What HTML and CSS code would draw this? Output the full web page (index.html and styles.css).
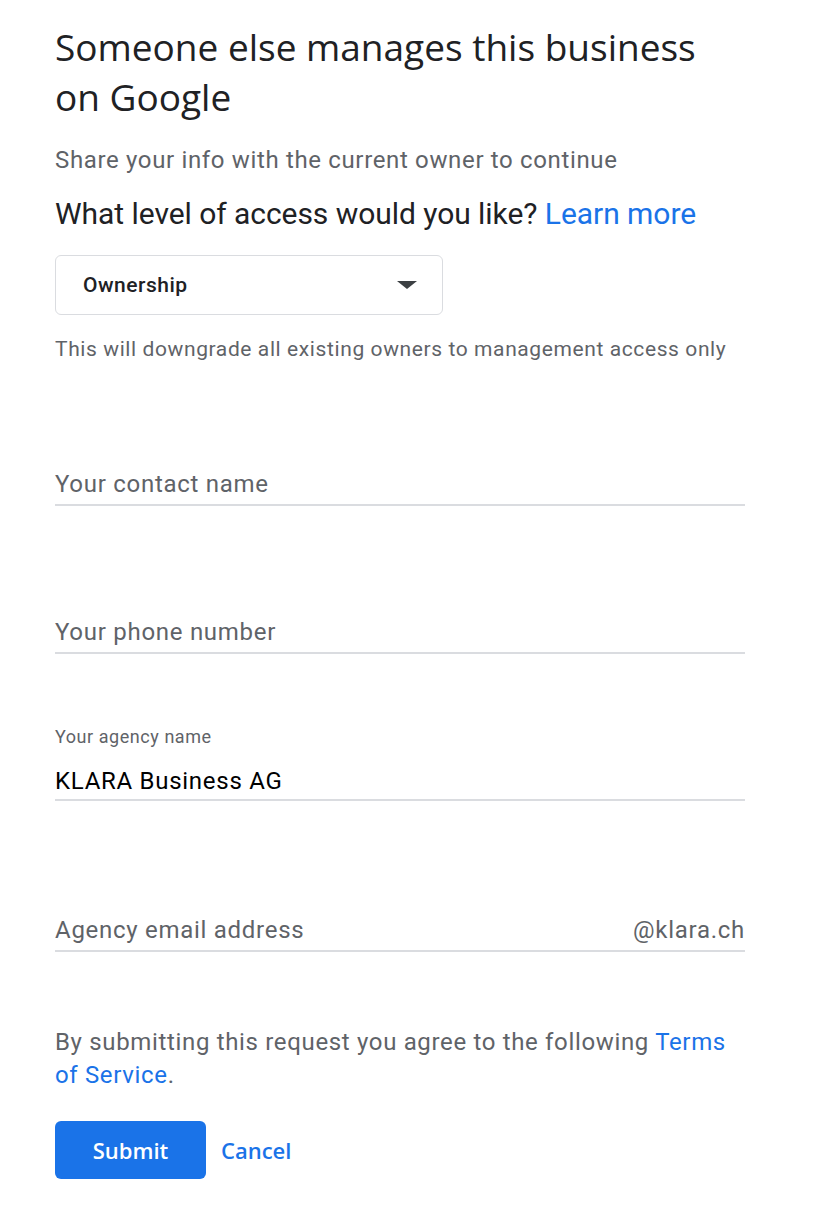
FILE: index.html
```html
<!DOCTYPE html>
<html lang="en">
<head>
<meta charset="utf-8">
<title>Someone else manages this business on Google</title>
<link rel="stylesheet" href="styles.css">
</head>
<body>
<main class="page">
  <h1 class="title">Someone else manages this business on Google</h1>
  <p class="subtitle">Share your info with the current owner to continue</p>
  <p class="question">What level of access would you like? <a class="link" href="#">Learn more</a></p>
  <div class="select">
    <span class="select-value">Ownership</span>
    <span class="select-arrow"></span>
  </div>
  <p class="helper">This will downgrade all existing owners to management access only</p>

  <div class="field field-first">
    <div class="field-label hidden">Your contact name</div>
    <div class="field-input placeholder">Your contact name</div>
  </div>
  <div class="field field-second">
    <div class="field-label hidden">Your phone number</div>
    <div class="field-input placeholder">Your phone number</div>
  </div>
  <div class="field field-third">
    <div class="field-label">Your agency name</div>
    <div class="field-input value">KLARA Business AG</div>
  </div>
  <div class="field field-last">
    <div class="field-label hidden">Agency email address</div>
    <div class="field-input placeholder split"><span>Agency email address</span><span>@klara.ch</span></div>
  </div>

  <p class="terms">By submitting this request you agree to the following <a class="link" href="#">Terms</a> <a class="link" href="#">of Service</a>.</p>

  <div class="actions">
    <button class="btn-primary" type="button">Submit</button>
    <a class="btn-text" href="#">Cancel</a>
  </div>
</main>
</body>
</html>
```

FILE: styles.css
```css
html, body {
  margin: 0;
  padding: 0;
  background: #ffffff;
}

body {
  font-family: Roboto, "Noto Sans", Arial, sans-serif;
  color: #202124;
}

.page {
  width: 690px;
  padding: 22px 0 40px 55px;
}

.title {
  margin: 0;
  max-width: 660px;
  font-family: "Open Sans", Roboto, sans-serif;
  font-weight: 400;
  font-size: 37px;
  line-height: 50px;
  color: #202124;
  letter-spacing: 0;
}

.subtitle {
  margin: 22px 0 0;
  font-size: 24px;
  line-height: 32px;
  letter-spacing: 0.65px;
  color: #5f6368;
}

.question {
  margin: 20px 0 0;
  font-size: 30px;
  line-height: 36px;
  letter-spacing: -0.05px;
  color: #202124;
}

.link {
  color: #1a73e8;
  text-decoration: none;
}

.select {
  margin-top: 23px;
  width: 388px;
  height: 60px;
  box-sizing: border-box;
  border: 1.5px solid #dadce0;
  border-radius: 6px;
  display: flex;
  align-items: center;
  justify-content: space-between;
  padding: 0 25px 0 27px;
}

.select-value {
  font-size: 21px;
  font-weight: 500;
  letter-spacing: 0.5px;
  color: #202124;
}

.select-arrow {
  width: 0;
  height: 0;
  border-left: 10px solid transparent;
  border-right: 10px solid transparent;
  border-top: 8px solid #3c4043;
}

.helper {
  margin: 20px 0 0;
  font-size: 21px;
  line-height: 28px;
  letter-spacing: 0.6px;
  color: #5f6368;
}

.field-first {
  margin-top: 64px;
}

.field-second {
  margin-top: 69px;
}

.field-third {
  margin-top: 71px;
}

.field-last {
  margin-top: 72px;
}

.field-label {
  font-size: 18px;
  line-height: 24px;
  letter-spacing: 0.55px;
  color: #5f6368;
  margin-bottom: 17px;
}

.field-third .field-label {
  margin-bottom: 16px;
}

.field-third .field-input {
  padding-bottom: 2px;
}

.field-label.hidden {
  visibility: hidden;
}

.field-input {
  font-size: 24px;
  line-height: 32px;
  letter-spacing: 0.72px;
  padding-bottom: 4px;
  border-bottom: 2px solid #dadce0;
}

.placeholder {
  color: #5f6368;
}

.value {
  color: #000000;
}

.split {
  display: flex;
  justify-content: space-between;
}

.terms {
  margin: 74px 0 0;
  font-size: 24px;
  line-height: 33px;
  letter-spacing: 0.66px;
  color: #5f6368;
}

.actions {
  margin-top: 29px;
  display: flex;
  align-items: center;
  gap: 15px;
}

.btn-primary {
  width: 151px;
  height: 58px;
  border: none;
  border-radius: 6px;
  background: #1a73e8;
  color: #ffffff;
  font-family: "Open Sans", Roboto, sans-serif;
  font-size: 22px;
  font-weight: 600;
  cursor: pointer;
  padding: 0;
}

.btn-text {
  color: #1a73e8;
  font-family: "Open Sans", Roboto, sans-serif;
  font-size: 22px;
  font-weight: 600;
  text-decoration: none;
}
```
